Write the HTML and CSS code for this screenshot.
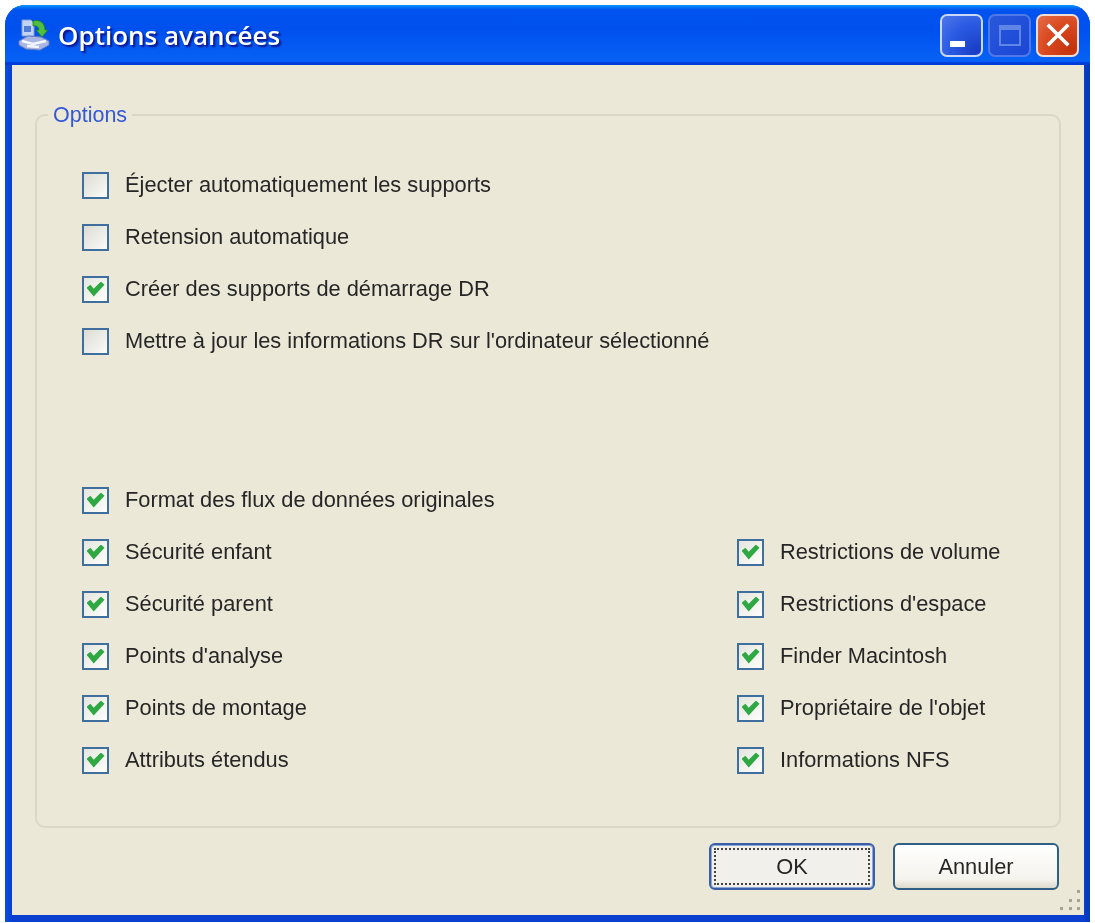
FILE: index.html
```html
<!DOCTYPE html>
<html lang="fr">

<head>
    <meta charset="UTF-8">
    <title>Options avancées</title>
    <link rel="stylesheet" href="styles.css">
</head>

<body>
    <div class="window">
        <!-- barre de titre -->
        <div class="titlebar">
            <svg class="app-icon" viewBox="0 0 32 32" width="32" height="32">
                <path d="M4 1h9l3 3v13H4z" fill="#c3d3f3" stroke="#7f9ad6"/>
                <rect x="6" y="7" width="7" height="6" fill="#4f7ad6"/>
                <path d="M1 22l9-5 13 1 8 4v4l-9 5-14-1-7-4z" fill="#a9b6e4" stroke="#6b7cc0"/>
                <path d="M4 22l11 3 13-3M9 27l12 1" fill="none" stroke="#f4f6fd" stroke-width="2.4"/>
                <path d="M15 2c7-2 12 2 12 9l3 0-6 7-6-7 3 0c0-3-3-5-6-4z" fill="#4fbf3e" stroke="#1d7a2a" stroke-width=".8"/>
            </svg>
            <span class="title">Options avancées</span>
            <div class="controls">
                <div class="ctl ctl-min"><span class="min-bar"></span></div>
                <div class="ctl ctl-max"><span class="max-box"></span></div>
                <div class="ctl ctl-close">
                    <svg viewBox="0 0 24 24" width="24" height="24">
                        <path d="M3 3l18 18M21 3L3 21" stroke="#fff" stroke-width="3.6" stroke-linecap="square"/>
                    </svg>
                </div>
            </div>
        </div>

        <div class="client">
            <fieldset class="group">
                <legend>Options</legend>

                <div class="opt-list">
                    <label class="opt"><span class="box"></span>Éjecter automatiquement les supports</label>
                    <label class="opt"><span class="box"></span>Retension automatique</label>
                    <label class="opt"><span class="box on"></span>Créer des supports de démarrage DR</label>
                    <label class="opt"><span class="box"></span>Mettre à jour les informations DR sur l'ordinateur sélectionné</label>
                </div>

                <div class="opt-grid">
                    <label class="opt wide"><span class="box on"></span>Format des flux de données originales</label>
                    <label class="opt"><span class="box on"></span>Sécurité enfant</label>
                    <label class="opt"><span class="box on"></span>Restrictions de volume</label>
                    <label class="opt"><span class="box on"></span>Sécurité parent</label>
                    <label class="opt"><span class="box on"></span>Restrictions d'espace</label>
                    <label class="opt"><span class="box on"></span>Points d'analyse</label>
                    <label class="opt"><span class="box on"></span>Finder Macintosh</label>
                    <label class="opt"><span class="box on"></span>Points de montage</label>
                    <label class="opt"><span class="box on"></span>Propriétaire de l'objet</label>
                    <label class="opt"><span class="box on"></span>Attributs étendus</label>
                    <label class="opt"><span class="box on"></span>Informations NFS</label>
                </div>
            </fieldset>

            <div class="actions">
                <button class="btn btn-default"><span class="btn-label focus">OK</span></button>
                <button class="btn"><span class="btn-label">Annuler</span></button>
            </div>
            <div class="grip"></div>
        </div>
    </div>
</body>

</html>
```

FILE: styles.css
```css
* {
    margin: 0;
    padding: 0;
    box-sizing: border-box;
}

body {
    background: #fff;
    padding: 5px;
    font-family: "Liberation Sans", Arial, sans-serif;
    font-size: 21.8px;
    color: #262626;
}

.window {
    width: 1085px;
    height: 917px;
    display: flex;
    flex-direction: column;
    background: linear-gradient(90deg, #0a4fe0, #0a3fd0 7px, #0a3fd0 calc(100% - 7px), #0636b8);
    border-radius: 20px 20px 0 0;
    padding: 0 6px 7px 7px;
    filter: blur(0.6px);
}

.titlebar {
    height: 60px;
    margin: 0 -6px 0 -7px;
    padding: 0 11px 0 13px;
    display: flex;
    align-items: center;
    border-radius: 20px 20px 0 0;
    background: linear-gradient(180deg, #0997ff, #0053ee 8%, #0050ee 40%, #0660f4 88%, #0660f4 93%, #005bff 95%, #003dd7 96%, #003dd7);
}

.app-icon {
    flex: none;
}

.title {
    margin-left: 8px;
    font-family: "Open Sans", sans-serif;
    font-weight: 600;
    font-size: 26px;
    color: #fff;
    text-shadow: 2px 2px 2px #0f1089;
}

.controls {
    margin-left: auto;
    display: flex;
    gap: 5px;
}

.ctl {
    width: 43px;
    height: 43px;
    border: 2px solid #c9d8f8;
    border-radius: 7px;
    display: flex;
    align-items: center;
    justify-content: center;
    position: relative;
    background: radial-gradient(circle at 90% 90%, #1a3cc4, #2a5ae2 55%, #4f78ea);
}

.ctl-max {
    border-color: #4f78e8;
    background: linear-gradient(135deg, #2a58dc, #1a46d4);
}

.ctl-close {
    border-color: #f0dcd2;
    background: radial-gradient(circle at 85% 85%, #c4340c, #d9481f 55%, #e4704c);
}

.min-bar {
    position: absolute;
    left: 8px;
    bottom: 8px;
    width: 15px;
    height: 6px;
    background: #fff;
}

.max-box {
    width: 22px;
    height: 21px;
    border: 2px solid #5f86e6;
    border-top-width: 5px;
}

.client {
    flex: 1;
    position: relative;
    background: #ebe8d8;
    padding: 38px 23px 0 23px;
    display: flex;
    flex-direction: column;
}

.group {
    height: 725px;
    border: 2px solid #dad7c8;
    border-radius: 10px;
    padding: 32px 0 0 45px;
}

.group legend {
    margin-left: -34px;
    padding: 0 5px;
    line-height: 24px;
    font-size: 21.5px;
    color: #3658d4;
}

.opt {
    height: 52px;
    display: flex;
    align-items: center;
    gap: 16px;
}

.opt-list {
    margin-bottom: 107px;
}

.opt-grid {
    display: grid;
    grid-template-columns: 655px 1fr;
}

.wide {
    grid-column: 1 / -1;
}

.box {
    flex: none;
    width: 27px;
    height: 27px;
    border: 2px solid #3f6f9f;
    background: linear-gradient(135deg, #dcdcd4, #fbfbf8);
    display: flex;
    align-items: center;
    justify-content: center;
}

.box.on {
    background: linear-gradient(135deg, #e6e6df, #fdfdfb);
}

.box.on::after {
    content: "";
    width: 18px;
    height: 15px;
    background: #2fa844;
    clip-path: polygon(0 42%, 22% 22%, 40% 48%, 80% 0, 100% 22%, 40% 100%);
}

.actions {
    margin-top: 15px;
    padding-right: 2px;
    display: flex;
    justify-content: flex-end;
    gap: 18px;
}

.btn {
    width: 166px;
    height: 47px;
    padding: 3px;
    border: 2px solid #2f5f84;
    border-radius: 6px;
    background: linear-gradient(180deg, #fff, #f4f3ec 80%, #dcd8cc);
    font: inherit;
    color: #262626;
}

.btn-default {
    border-color: #3a5fa8;
    background: #f1f0ea;
    box-shadow: inset 0 0 0 1px #8fa8d8;
}

.btn-label {
    display: flex;
    align-items: center;
    justify-content: center;
    height: 100%;
}

.focus {
    border: 2px dotted #444;
}

.grip {
    position: absolute;
    right: 4px;
    bottom: 5px;
    width: 3px;
    height: 3px;
    background: #a5a397;
    box-shadow: 0 -8px #a5a397, 0 -17px #a5a397, -8px 0 #a5a397, -8px -8px #a5a397, -17px 0 #a5a397;
}
```
